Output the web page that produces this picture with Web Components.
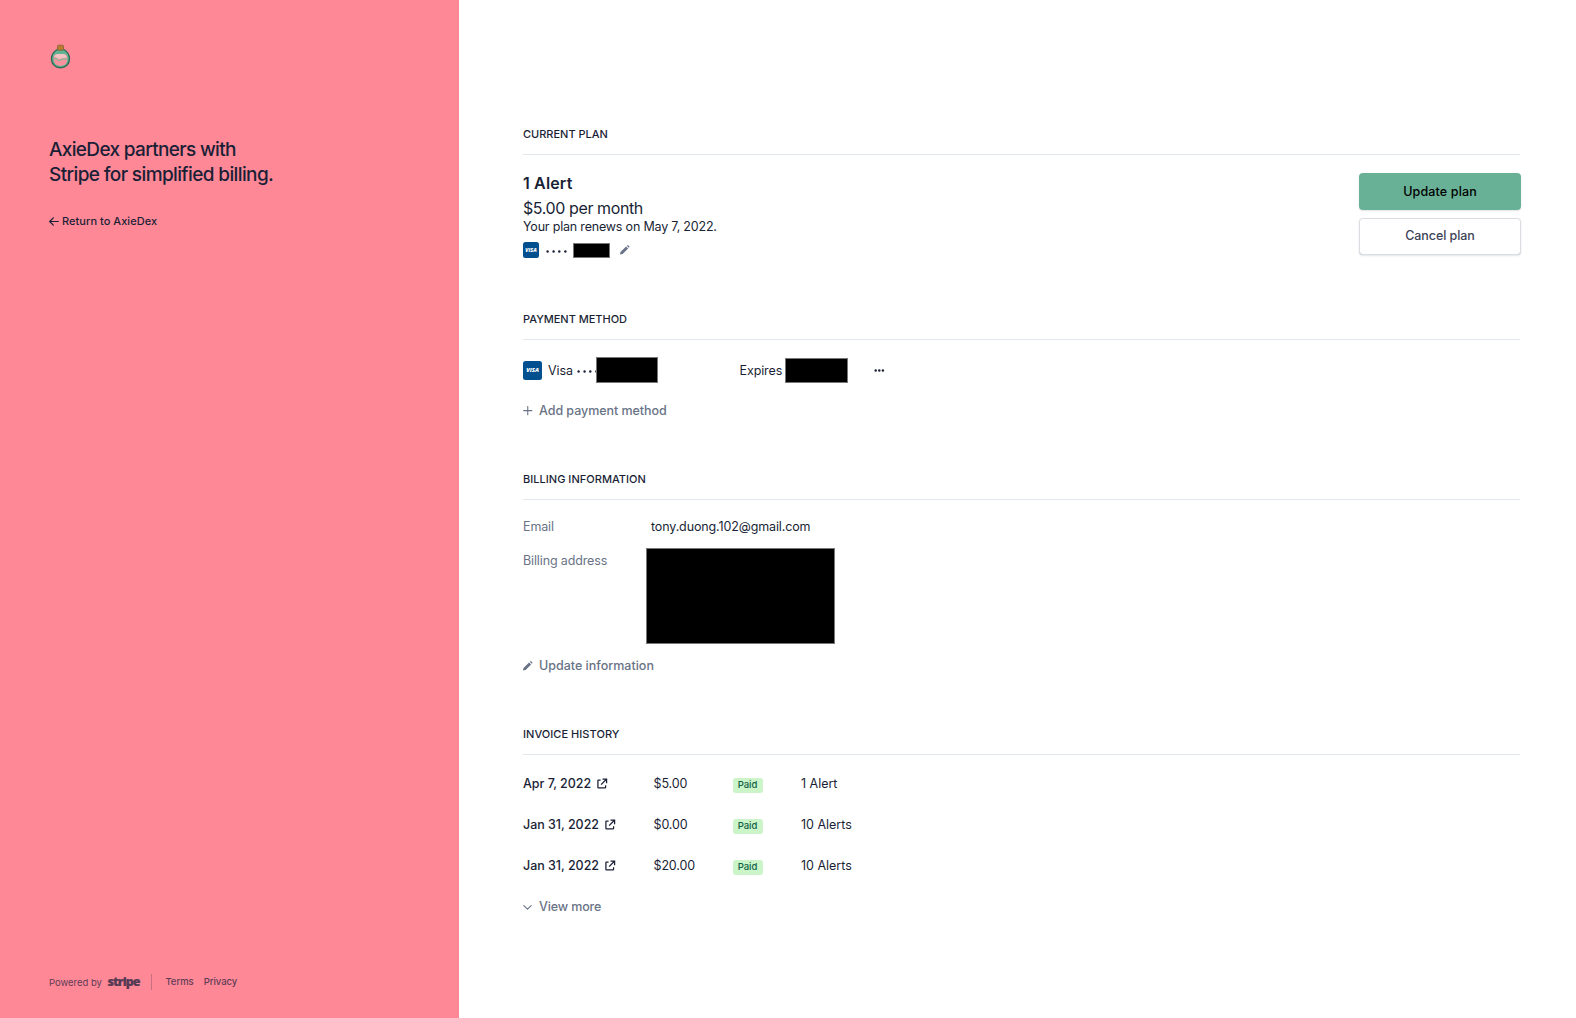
<!DOCTYPE html>
<html lang="en">
<head>
<meta charset="utf-8">
<title>Billing</title>
<style>
html, body { margin: 0; height: 100%; }
body { font-family: Inter, "Liberation Sans", sans-serif; color: #1a1f36; background: #fff; overflow: hidden; }
</style>
</head>
<body>
<billing-portal></billing-portal>
<script>
const define = (name, html) => {
  const t = document.createElement('template');
  t.innerHTML = html;
  customElements.define(name, class extends HTMLElement {
    constructor() { super(); this.attachShadow({ mode: 'open' }).append(t.content.cloneNode(true)); }
  });
};

define('brand-logo', `<style>:host{display:block;width:24px;height:26px}svg{display:block}</style>
<svg width="24" height="26" viewBox="0 0 24 26">
<path d="M8.300 5.500C4.800 7.500 2.500 10.800 2.500 14.800c0 5.300 4 8.900 9 8.900s9-3.600 9-8.900c0-4-2.300-7.300-5.800-9.300z" fill="#62b394" stroke="#2c6b55" stroke-width="1.400"/>
<path d="M4.600 13.800Q5 10.300 8 10.300h7q3 0 3.400 3.500.6 7.900-6.900 8.200-7.500-.3-6.900-8.200z" fill="#f8929d"/>
<path d="M5 12.800q.8-2.700 3.500-2.700h6q2.700 0 3.500 2.700-1 1.400-3 1.200t-3.500.6-3.500-.6-3-1.200z" fill="#f3c3c3"/>
<path d="M4.700 15.400q2.200-2 3.700 0t3.300.6 3.300-1.200 3.300.4" fill="none" stroke="#86b79c" stroke-width="1.200"/>
<rect x="8.500" y="1.200" width="6" height="5" rx="1" fill="#bd7a32" stroke="#7c6430" stroke-width=".8"/>
</svg>`);

define('pencil-icon', `<style>:host{display:block;width:10px;height:10px}svg{display:block}</style>
<svg width="10" height="10" viewBox="0 0 10 10" fill="#697386"><path d="M0 9.500l.5-2.600L6.100 1.400l2 2L2.600 9z"/><path d="M6.900.7l.5-.5q.4-.3.8 0l1.200 1.200q.3.400 0 .8l-.5.5z"/></svg>`);
define('arrow-icon', `<style>:host{display:block;width:10px;height:9px}svg{display:block}</style>
<svg width="10" height="9" viewBox="0 0 10 9" fill="none" stroke="#1a1f36" stroke-width="1.200" stroke-linecap="round" stroke-linejoin="round"><path d="M9.300 4.500H.8M4.300.8L.7 4.500l3.600 3.700"/></svg>`);
define('plus-icon', `<style>:host{display:block;width:10px;height:10px}svg{display:block}</style>
<svg width="10" height="10" viewBox="0 0 10 10" stroke="#697386" stroke-width="1.100" stroke-linecap="round"><path d="M.6 4.600h8.300M4.750.5v8.200"/></svg>`);
define('chevron-icon', `<style>:host{display:block;width:10px;height:10px}svg{display:block}</style>
<svg width="10" height="10" viewBox="0 0 10 10" fill="none" stroke="#697386" stroke-width="1.100" stroke-linecap="round" stroke-linejoin="round"><path d="M.8 3.700l3.700 3.500 3.700-3.500"/></svg>`);
define('external-icon', `<style>:host{display:block;width:11px;height:11px}svg{display:block}</style>
<svg width="11" height="11" viewBox="0 0 11 11" fill="none" stroke="#1a1f36" stroke-width="1.250"><path d="M3.600 2H1.500Q.9 2 .9 2.600V9.200q0 .6.6.6H8q.6 0 .6-.6V7.200"/><path d="M5.500 1.100H9.600V5.200M9.400 1.300L4.100 6.600"/></svg>`);
define('more-icon', `<style>:host{display:block;width:11px;height:3px}svg{display:block}</style>
<svg width="11" height="3" viewBox="0 0 11 3" fill="#1a1f36"><circle cx="1.700" cy="1.500" r="1.200"/><circle cx="5.300" cy="1.500" r="1.200"/><circle cx="8.900" cy="1.500" r="1.200"/></svg>`);
define('visa-badge', `<style>:host{display:flex;align-items:center;justify-content:center;width:var(--s,16px);height:var(--s,16px);border-radius:2.500px;background:#00508f;color:#fff;font:italic 800 var(--f,5.200px)/1 "Open Sans",sans-serif}span{padding-top:1px}</style><span>VISA</span>`);
define('card-dots', `<style>:host{display:block;height:3px}svg{display:block}</style><svg width="22" height="3" viewBox="0 0 22 3" fill="#1a1f36"><circle cx="1.600" cy="1.500" r="1.200"/><circle cx="7.600" cy="1.500" r="1.200"/><circle cx="13.300" cy="1.500" r="1.200"/><circle cx="19.400" cy="1.500" r="1.200"/></svg>`);
define('redacted-box', `<style>:host{display:block;box-sizing:border-box;background:#000;border:1px solid #777;flex:none;position:relative}</style>`);

define('portal-section', `<style>
:host{display:block;box-sizing:border-box}
h2{margin:0;font-size:11px;font-weight:500;line-height:16px;padding-bottom:12px;border-bottom:1px solid #e3e8ee}
</style><h2><slot name="title"></slot></h2><slot></slot>`);

define('portal-button', `<style>
:host{display:flex;box-sizing:border-box;width:162px;height:37px;align-items:center;justify-content:center;border-radius:4px;font-size:12.500px;font-weight:500;background:#fff;color:#3c4257;box-shadow:0 0 0 1px #d9dce1 inset,0 -1px 0 #b9bcc3 inset,0 1px 2px rgba(60,66,87,.14);line-height:20px;padding-bottom:1px}
:host([primary]){background:#68b096;color:#000;letter-spacing:.140px;box-shadow:0 1px 2px rgba(60,66,87,.16);padding:1px 0 0 0}
</style><span><slot></slot></span>`);

define('text-action', `<style>:host{display:flex;align-items:center;gap:6px;height:20px;font-size:12.500px;font-weight:500;color:#697386;line-height:20px;white-space:nowrap}</style><slot name="icon"></slot><span><slot></slot></span>`);

define('invoice-row', `<style>
:host{display:grid;grid-template-columns:130px 80px 68px auto;height:41px;align-items:center;font-size:12.500px;line-height:20px}
.d{display:flex;align-items:center;gap:6px;font-weight:550;letter-spacing:-.030px}
.a{letter-spacing:-.140px;padding-left:.5px}
.p{justify-self:start;background:#cbf4c9;color:#0e6245;border-radius:3px;font-size:9.500px;font-weight:500;line-height:14px;height:15px;width:29.500px;padding-right:.5px;box-sizing:border-box;text-align:center;margin-top:3px}
.n{letter-spacing:-.020px}
</style><span class="d"><slot name="date"></slot><external-icon></external-icon></span><span class="a"><slot name="amount"></slot></span><span class="p">Paid</span><span class="n"><slot name="plan"></slot></span>`);

define('portal-sidebar', `<style>
:host{display:flex;flex-direction:column;box-sizing:border-box;width:459px;height:100%;flex:none;background:#ff8897;padding:44px 49px 0}
h1{margin:67px 0 0;font-size:19px;line-height:25px;font-weight:500;letter-spacing:-.620px}
.l1{letter-spacing:-.660px}
.back{display:flex;align-items:center;gap:3px;margin-top:26px;font-size:11px;font-weight:500;line-height:16px;letter-spacing:.04px}
footer{margin:auto 0 26px;height:20px;display:flex;align-items:center;font-size:9.500px;color:#5f3c55;line-height:16px}
.pw{letter-spacing:-.020px;padding-top:2px}
.st{font-size:12.500px;font-weight:800;letter-spacing:-.950px;margin-left:5.500px;font-family:"Open Sans",sans-serif;width:32.500px;color:#563a55;padding-bottom:1px;-webkit-text-stroke:.2px #563a55}
.bar{width:1px;height:16px;background:#c96f84;margin:0 13px 0 11.500px}
.ln{font-weight:500;margin-right:10px;letter-spacing:-.030px}
</style>
<brand-logo></brand-logo>
<h1><span class="l1">AxieDex partners with</span><br>Stripe for simplified billing.</h1>
<div class="back"><arrow-icon></arrow-icon><span>Return to AxieDex</span></div>
<footer><span class="pw">Powered by</span><span class="st">stripe</span><span class="bar"></span><span class="ln">Terms</span><span class="ln">Privacy</span></footer>`);

define('billing-portal', `<style>
:host{display:flex;height:1018px;width:1576px}
main{flex:1;box-sizing:border-box;padding:126px 56px 0 64px;font-size:12.500px;line-height:20px}
.plan{display:flex;justify-content:space-between;padding-top:16px;margin-right:-1px}
.name{font-size:16px;font-weight:600;line-height:25px;letter-spacing:.150px}
.price{font-size:16px;line-height:24px;letter-spacing:-.400px}
.renew{line-height:14px;letter-spacing:-.190px}
.card{display:flex;align-items:center;height:16px;margin-top:8px}
.btns{display:flex;flex-direction:column;gap:8px;padding-top:2px}
.pay{display:flex;align-items:center;height:26px;margin:17px 0 18px}
.pay span{padding-top:2px}
.info{display:grid;grid-template-columns:123px auto;justify-content:start;padding-top:17px;row-gap:11px}
.lbl{color:#697386;letter-spacing:-.130px}
.inv{padding-top:8px}
</style>
<portal-sidebar></portal-sidebar>
<main>
<portal-section style="height:185px"><span slot="title">CURRENT PLAN</span>
<div class="plan"><div>
<div class="name">1 Alert</div><div class="price">$5.00 per month</div><div class="renew">Your plan renews on May 7, 2022.</div>
<div class="card"><visa-badge></visa-badge><card-dots style="margin:2px 5px 0 7px"></card-dots><redacted-box style="width:37px;height:15px;margin-top:1px"></redacted-box><pencil-icon style="margin:-1px 0 0 10px"></pencil-icon></div>
</div><div class="btns"><portal-button primary>Update plan</portal-button><portal-button style="letter-spacing:-.080px">Cancel plan</portal-button></div></div>
</portal-section>
<portal-section style="height:160px"><span slot="title" style="letter-spacing:-.030px">PAYMENT METHOD</span>
<div class="pay"><visa-badge style="--s:19px;--f:5.800px"></visa-badge><span style="margin-left:6px;width:29px;letter-spacing:-.1px">Visa</span><card-dots style="margin-top:3px;width:19px"></card-dots><redacted-box style="width:62px;height:26px"></redacted-box><span style="margin-left:81.500px;width:45.500px;letter-spacing:-.1px">Expires</span><redacted-box style="width:63px;height:25px;margin-top:1px"></redacted-box><more-icon style="margin:1px 0 0 26px"></more-icon></div>
<text-action style="letter-spacing:-.050px"><plus-icon slot="icon"></plus-icon>Add payment method</text-action>
</portal-section>
<portal-section style="height:255px"><span slot="title" style="letter-spacing:.030px">BILLING INFORMATION</span>
<div class="info"><span class="lbl">Email</span><span style="padding-left:5px;letter-spacing:-.125px">tony.duong.102@gmail.com</span><span class="lbl" style="padding-top:3px">Billing address</span><redacted-box style="width:189px;height:96px"></redacted-box></div>
<text-action style="margin-top:12px"><pencil-icon slot="icon"></pencil-icon>Update information</text-action>
</portal-section>
<portal-section><span slot="title" style="letter-spacing:.040px">INVOICE HISTORY</span>
<div class="inv">
<invoice-row><span slot="date">Apr 7, 2022</span><span slot="amount">$5.00</span><span slot="plan">1 Alert</span></invoice-row>
<invoice-row><span slot="date">Jan 31, 2022</span><span slot="amount">$0.00</span><span slot="plan">10 Alerts</span></invoice-row>
<invoice-row><span slot="date">Jan 31, 2022</span><span slot="amount">$20.00</span><span slot="plan">10 Alerts</span></invoice-row>
<text-action style="margin-top:11px;letter-spacing:-.130px"><chevron-icon slot="icon"></chevron-icon>View more</text-action>
</div></portal-section>
</main>`);
</script>
</body>
</html>
